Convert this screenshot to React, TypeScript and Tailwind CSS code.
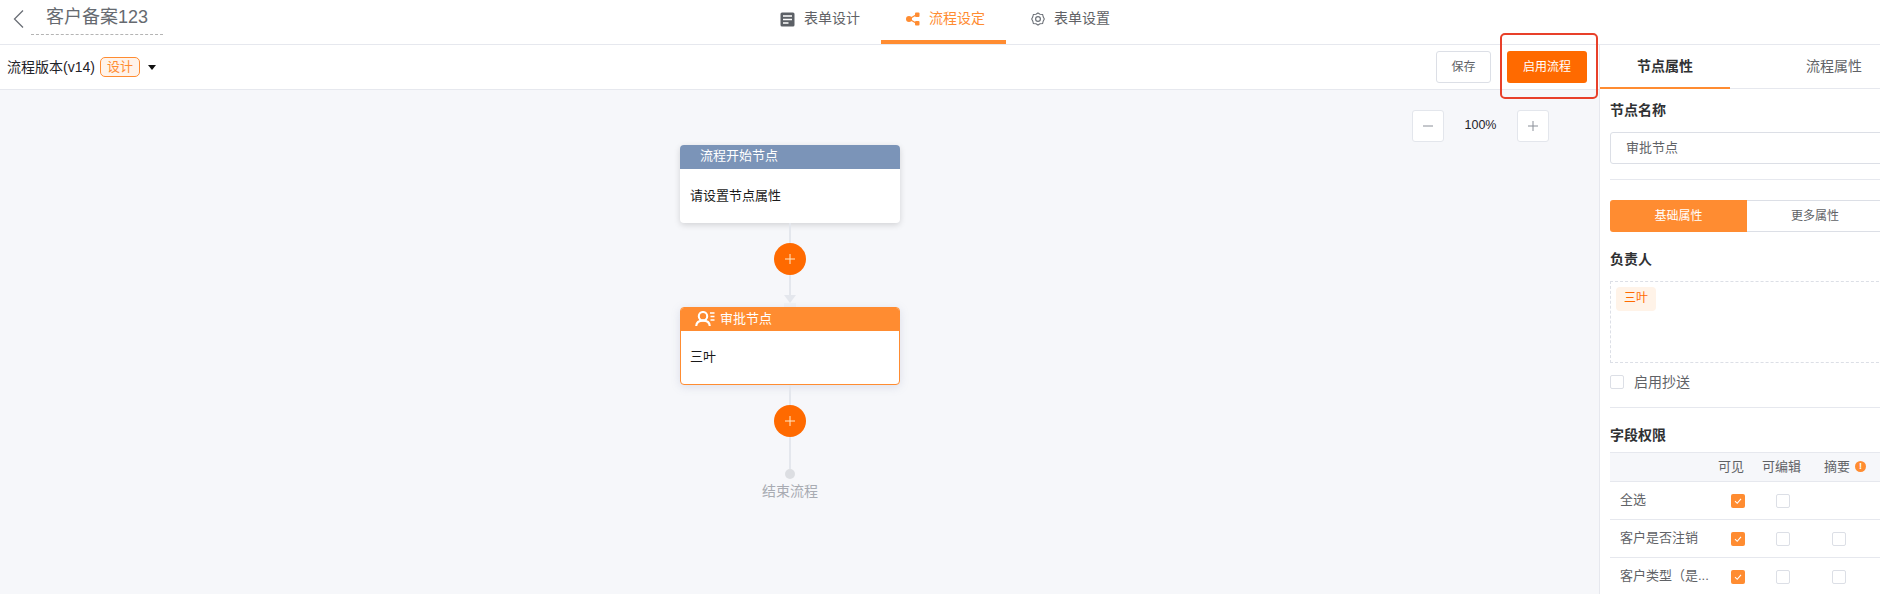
import React from "react";

const font = { fontFamily: '"Liberation Sans","Noto Sans CJK SC",sans-serif' };

function Check({ on }: { on?: boolean }) {
  return on ? (
    <span className="flex h-[14px] w-[14px] items-center justify-center rounded-[2px] bg-[#ff8c31]">
      <svg width="10" height="10" viewBox="0 0 10 10" fill="none">
        <path d="M2 5.2 L4.2 7.3 L8 2.8" stroke="#fff" strokeWidth="1.1" />
      </svg>
    </span>
  ) : (
    <span className="block h-[14px] w-[14px] rounded-[2px] border border-[#dcdfe6] bg-white" />
  );
}

function PlusCircle() {
  return (
    <div className="flex h-[32px] w-[32px] items-center justify-center rounded-full bg-[#ff6a00]">
      <svg width="12" height="12" viewBox="0 0 12 12">
        <path d="M6 1 V11 M1 6 H11" stroke="#ffe9c8" strokeWidth="1" />
      </svg>
    </div>
  );
}

function Row({ name, summary = true }: { name: string; summary?: boolean }) {
  return (
    <div className="grid h-[38px] grid-cols-[108px_44px_62px_60px] items-center border-b border-[#e6e8ee] text-[13px] text-[#606266]">
      <span className="whitespace-nowrap pb-[1px] pl-[10px]">{name}</span>
      <span className="pl-[13px]"><Check on /></span>
      <span className="pl-[14px]"><Check /></span>
      <span className="pl-[8px]">{summary ? <Check /> : null}</span>
    </div>
  );
}

export default function App() {
  return (
    <div style={font} className="relative flex h-[594px] w-[1880px] flex-col overflow-hidden bg-white">
      {/* top header */}
      <header className="flex h-[45px] shrink-0 border-b border-[#e6e8ee]">
        <div className="flex w-[755px] shrink-0">
          <svg className="ml-[12px] mt-[9px]" width="13" height="20" viewBox="0 0 13 20" fill="none">
            <path d="M11 1.5 L2.5 10 L11 18.5" stroke="#6b6f76" strokeWidth="1.3" />
          </svg>
          <div className="ml-[6px] h-[35px] w-[132px] border-b border-dashed border-[#b4b4b4] pl-[15px] pt-[5px] text-[18px] leading-[24px] text-[#666a70]">
            客户备案123
          </div>
        </div>
        <nav className="flex">
          <div className="flex h-[44px] w-[126px] items-start pl-[25px] pt-[9px] text-[14px] leading-[18px] text-[#606266]">
            <svg className="mr-[9px] mt-[3px]" width="15" height="15" viewBox="0 0 15 15">
              <rect x="0.5" y="0.5" width="14" height="14" rx="1.5" fill="#5c6066" />
              <path d="M3 4 H12 M3 7.5 H12 M3 11 H8.5" stroke="#fff" strokeWidth="1.5" />
            </svg>
            表单设计
          </div>
          <div className="flex h-[44px] w-[125px] items-start border-b-4 border-[#ff8c31] pl-[25px] pt-[9px] text-[14px] leading-[18px] text-[#ff8c31]">
            <svg className="mr-[9px] mt-[3px]" width="14" height="14" viewBox="0 0 14 14" fill="#ff8c31">
              <circle cx="3" cy="7" r="3" />
              <rect x="9" y="0.5" width="4.5" height="4.5" rx="1" />
              <rect x="9" y="9" width="4.5" height="4.5" rx="1" />
              <path d="M3 7 L10 3 M3 7 L10 11" stroke="#ff8c31" strokeWidth="1.4" />
            </svg>
            流程设定
          </div>
          <div className="flex h-[44px] w-[125px] items-start pl-[25px] pt-[9px] text-[14px] leading-[18px] text-[#606266]">
            <svg className="mr-[9px] mt-[3px]" width="14" height="14" viewBox="0 0 14 14" fill="none" stroke="#6d7279">
              <path d="M7 1 L9 2.2 L11.6 2.4 L12.2 4.8 L13.3 7 L12.2 9.2 L11.6 11.6 L9 11.8 L7 13 L5 11.8 L2.4 11.6 L1.8 9.2 L0.7 7 L1.8 4.8 L2.4 2.4 L5 2.2 Z" strokeWidth="1.1" />
              <circle cx="7" cy="7" r="2.4" strokeWidth="1.2" />
            </svg>
            表单设置
          </div>
        </nav>
      </header>

      <div className="flex min-h-0 flex-1">
        {/* left column */}
        <main className="flex w-[1600px] shrink-0 flex-col border-r border-[#e6e8ee]">
          <div className="flex h-[45px] shrink-0 items-center border-b border-[#e6e8ee] pl-[7px] pr-[12px]">
            <span className="text-[14px] text-[#1f2329]">流程版本(v14)</span>
            <span className="ml-[5px] flex h-[20px] w-[40px] items-center justify-center rounded-[5px] border border-[#ff8c31] bg-[#fff3ea] text-[13px] text-[#ff8c31]">
              设计
            </span>
            <svg className="ml-[8px]" width="8" height="5" viewBox="0 0 8 5">
              <path d="M0 0 H8 L4 5 Z" fill="#111" />
            </svg>
            <div className="ml-auto flex items-center gap-[16px]">
              <button className="h-[32px] w-[55px] rounded-[3px] border border-[#dcdfe6] bg-white text-[12px] text-[#606266]">保存</button>
              <button className="h-[32px] w-[80px] rounded-[3px] bg-[#ff6a00] text-[12px] text-white">启用流程</button>
            </div>
          </div>

          {/* canvas */}
          <div className="relative flex-1 bg-[#f6f7fa] pl-[680px] pt-[55px]">
            <div className="absolute left-[1412px] top-[20px] flex items-center">
              <button className="flex h-[32px] w-[32px] items-center justify-center rounded-[3px] border border-[#e3e6ec] bg-white">
                <svg width="12" height="12" viewBox="0 0 12 12"><path d="M1 6 H11" stroke="#8a8f98" strokeWidth="1" /></svg>
              </button>
              <span className="w-[73px] pb-[1px] text-center text-[12.5px] text-[#1f2329]">100%</span>
              <button className="flex h-[32px] w-[32px] items-center justify-center rounded-[3px] border border-[#e3e6ec] bg-white">
                <svg width="12" height="12" viewBox="0 0 12 12"><path d="M6 1 V11 M1 6 H11" stroke="#8a8f98" strokeWidth="1" /></svg>
              </button>
            </div>

            <div className="flex w-[220px] flex-col items-center">
              {/* start node */}
              <div className="w-[220px] overflow-hidden rounded-[4px] bg-white shadow-[0_2px_6px_rgba(0,0,0,0.15)]">
                <div className="h-[24px] bg-[#7b94b8] pl-[20px] text-[13px] leading-[22px] text-white">流程开始节点</div>
                <div className="flex h-[54px] items-center pb-[1px] pl-[10px] text-[13px] text-[#1a1a1a]">请设置节点属性</div>
              </div>
              <div className="h-[20px] w-[2px] bg-[#e4e7ed]" />
              <PlusCircle />
              <div className="h-[20px] w-[2px] bg-[#e4e7ed]" />
              <svg className="block" width="12" height="8" viewBox="0 0 12 8"><path d="M0 0 H12 L6 8 Z" fill="#e4e7ed" /></svg>
              <div className="h-[4px] w-[12px] bg-[#f0f2f6]" />
              {/* approve node */}
              <div className="w-[220px] overflow-hidden rounded-[4px] border border-[#ff8c31] bg-white shadow-[0_2px_10px_rgba(120,130,170,0.2)]">
                <div className="flex h-[23px] items-center bg-[#ff8c31] pb-[2px] pl-[14px] text-[13px] text-white">
                  <svg className="mr-[5px]" width="20" height="15" viewBox="0 0 20 15" fill="none" stroke="#fff">
                    <circle cx="8" cy="5.2" r="4.2" strokeWidth="2.1" />
                    <path d="M1.2 15 C1.5 11 4.5 9.6 8 9.6 C11.5 9.6 14.5 11 14.8 15" strokeWidth="2.1" />
                    <path d="M15 2 H19.5 M15.5 5.5 H19.5 M15.5 9 H19.5" strokeWidth="1.5" />
                  </svg>
                  审批节点
                </div>
                <div className="flex h-[53px] items-center pb-[1px] pl-[9px] text-[13px] text-[#1a1a1a]">三叶</div>
              </div>
              <div className="h-[20px] w-[2px] bg-[#e4e7ed]" />
              <PlusCircle />
              <div className="h-[32px] w-[2px] bg-[#e4e7ed]" />
              <div className="h-[10px] w-[10px] rounded-full bg-[#dcdee2]" />
              <div className="text-[14px] leading-[24px] text-[#a8abb2]">结束流程</div>
            </div>
          </div>
        </main>

        {/* right panel */}
        <aside className="w-[280px] shrink-0 overflow-hidden">
          <div className="flex h-[44px] border-b border-[#e6e8ee]">
            <div className="flex h-[44px] w-[130px] items-center justify-center border-b-2 border-[#ff8c31] text-[14px] font-bold text-[#303133]">节点属性</div>
            <div className="flex h-[43px] items-center pl-[76px] text-[14px] text-[#606266]">流程属性</div>
          </div>
          <div className="ml-[10px] w-[274px]">
            <div className="mt-[11px] text-[14px] font-bold leading-[20px] text-[#303133]">节点名称</div>
            <div className="mt-[12px] flex h-[32px] items-center rounded-[3px] border border-[#dcdfe6] pb-[1px] pl-[15px] text-[13px] text-[#606266]">审批节点</div>
            <div className="mt-[15px] h-px bg-[#e6e8ee]" />
            <div className="mt-[20px] flex h-[32px] text-[12px]">
              <div className="flex w-[137px] items-center justify-center rounded-l-[3px] bg-[#ff8c31] text-white">基础属性</div>
              <div className="flex w-[137px] items-center justify-center border-y border-r border-[#dcdfe6] text-[#606266]">更多属性</div>
            </div>
            <div className="mt-[17px] text-[14px] font-bold leading-[20px] text-[#303133]">负责人</div>
            <div className="mt-[12px] h-[82px] border border-dashed border-[#dcdfe6] pl-[5px] pt-[5px]">
              <span className="flex h-[24px] w-[40px] items-center justify-center rounded-[4px] bg-[#fff3e8] pb-[2px] text-[12px] text-[#ff6a00]">三叶</span>
            </div>
            <div className="mt-[12px] flex h-[14px] items-center gap-[10px] text-[14px] text-[#606266]">
              <Check />
              启用抄送
            </div>
            <div className="mt-[18px] h-px bg-[#e6e8ee]" />
            <div className="mt-[17px] text-[14px] font-bold leading-[20px] text-[#303133]">字段权限</div>
            <div className="mt-[7px] grid h-[30px] grid-cols-[108px_44px_62px_60px] items-center border-y border-[#e6e8ee] bg-[#f6f7fa] pb-[1px] text-[13px] text-[#606266]">
              <span />
              <span>可见</span>
              <span>可编辑</span>
              <span className="flex items-center gap-[5px]">
                摘要
                <span className="flex h-[11px] w-[11px] items-center justify-center rounded-full bg-[#ff8c31] text-[9px] font-bold leading-none text-white">!</span>
              </span>
            </div>
            <Row name="全选" summary={false} />
            <Row name="客户是否注销" />
            <Row name="客户类型（是..." />
          </div>
        </aside>
      </div>

      {/* red annotation */}
      <div className="pointer-events-none absolute left-[1500px] top-[33px] h-[66px] w-[98px] rounded-[5px] border-2 border-[#e8402a]" />
    </div>
  );
}
